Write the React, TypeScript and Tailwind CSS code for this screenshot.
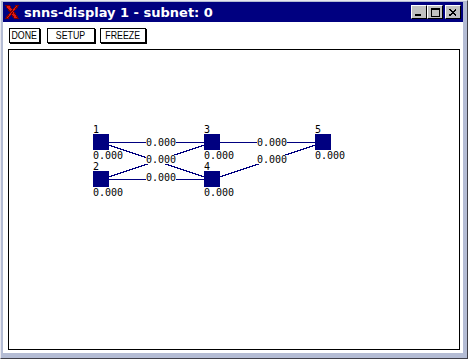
import React from "react";

const mono = { fontFamily: '"DejaVu Sans Mono", "Liberation Mono", monospace' };

type Node = { id: string; x: number; y: number };
const nodes: Node[] = [
  { id: "1", x: 84, y: 84 },
  { id: "2", x: 84, y: 121 },
  { id: "3", x: 195, y: 84 },
  { id: "4", x: 195, y: 121 },
  { id: "5", x: 306, y: 84 },
];
const c = (n: Node) => ({ cx: n.x + 8, cy: n.y + 8 });
const edges: [number, number][] = [
  [0, 2],
  [0, 3],
  [1, 2],
  [1, 3],
  [2, 4],
  [3, 4],
];
const edgeLabels = [
  { x: 137, y: 96 },
  { x: 137, y: 113 },
  { x: 137, y: 131 },
  { x: 248, y: 96 },
  { x: 248, y: 113 },
];

function Btn({ label, w }: { label: string; w: string }) {
  return (
    <div
      className={`${w} h-[15px] bg-white border border-black shadow-[1px_1px_0_#000] flex items-center justify-center text-[10.5px] leading-none text-black`}
      style={{ fontFamily: '"Liberation Sans", Arial, sans-serif' }}
    >
      <span className="inline-block scale-x-[0.84] whitespace-nowrap">{label}</span>
    </div>
  );
}

function WinBtn({ children }: { children: React.ReactNode }) {
  return (
    <div className="w-[16px] h-[14px] bg-[#c0c0c0] border-t border-l border-t-white border-l-white border-r border-b border-r-black border-b-black flex items-center justify-center">
      {children}
    </div>
  );
}

export default function App() {
  return (
    <div className="w-[468px] h-[359px] bg-[#b4bcd4] border-l border-t border-l-[#e8e8f0] border-t-[#e8e8f0] border-r border-b border-r-[#404048] border-b-[#404048] pl-[2px] pr-[4px] pb-[5px] pt-[1px] flex flex-col">
      <div className="h-[20px] bg-[#000080] flex items-center pl-[2px] pr-[2px] shrink-0">
        <svg width="14" height="14" viewBox="0 0 14 14" className="shrink-0" shapeRendering="crispEdges">
          <path d="M0.5 0.5 L4.5 0.5 L13.5 13.5 L9.5 13.5 Z" fill="#e01818" stroke="#7a0000" strokeWidth="1" />
          <path d="M11 0.5 L13.5 0.5 L3 13.5 L0.5 13.5 Z" fill="#e01818" stroke="#7a0000" strokeWidth="1" />
        </svg>
        <div
          className="ml-[5px] text-white font-bold text-[13px] leading-none whitespace-nowrap"
          style={{ fontFamily: '"DejaVu Sans", Verdana, sans-serif' }}
        >
          snns-display 1 - subnet: 0
        </div>
        <div className="ml-auto flex items-center">
          <WinBtn>
            <div className="w-[6px] h-[2px] bg-black mt-[6px] -ml-[2px]" />
          </WinBtn>
          <WinBtn>
            <div className="w-[9px] h-[9px] border border-black border-t-2" />
          </WinBtn>
          <div className="w-[2px]" />
          <WinBtn>
            <svg width="8" height="7" viewBox="0 0 8 7">
              <path d="M0.5 0.5 L7.5 6.5 M7.5 0.5 L0.5 6.5" stroke="#000" strokeWidth="1.5" shapeRendering="crispEdges" />
            </svg>
          </WinBtn>
        </div>
      </div>
      <div className="flex-1 bg-white flex flex-col">
        <div className="flex items-start mt-[6px] ml-[6px] h-[16px]">
          <Btn label="DONE" w="w-[31px]" />
          <div className="w-[7px]" />
          <Btn label="SETUP" w="w-[48px]" />
          <div className="w-[5px]" />
          <Btn label="FREEZE" w="w-[46px]" />
        </div>
        <div className="mt-[5px] ml-[5px] w-[452px] h-[301px] border border-black bg-white">
          <svg width="450" height="299" viewBox="0 0 450 299" style={mono}>
            {edges.map(([a, b], i) => {
              const p = c(nodes[a]);
              const q = c(nodes[b]);
              return (
                <line
                  key={i}
                  x1={p.cx}
                  y1={p.cy + 0.5}
                  x2={q.cx}
                  y2={q.cy + 0.5}
                  stroke="#000080"
                  strokeWidth="1"
                  shapeRendering="crispEdges"
                />
              );
            })}
            {edgeLabels.map((l, i) => (
              <g key={i}>
                <rect x={l.x} y={l.y - 8} width="30" height="9" fill="#fff" />
                <text x={l.x} y={l.y} fontSize="10" fill="#000">
                  0.000
                </text>
              </g>
            ))}
            {nodes.map((n) => (
              <g key={n.id}>
                <rect x={n.x} y={n.y} width="16" height="16" fill="#000080" />
                <text x={n.x} y={n.y - 1} fontSize="10" fill="#000">
                  {n.id}
                </text>
                <text x={n.x} y={n.y + 25} fontSize="10" fill="#000">
                  0.000
                </text>
              </g>
            ))}
          </svg>
        </div>
      </div>
    </div>
  );
}
